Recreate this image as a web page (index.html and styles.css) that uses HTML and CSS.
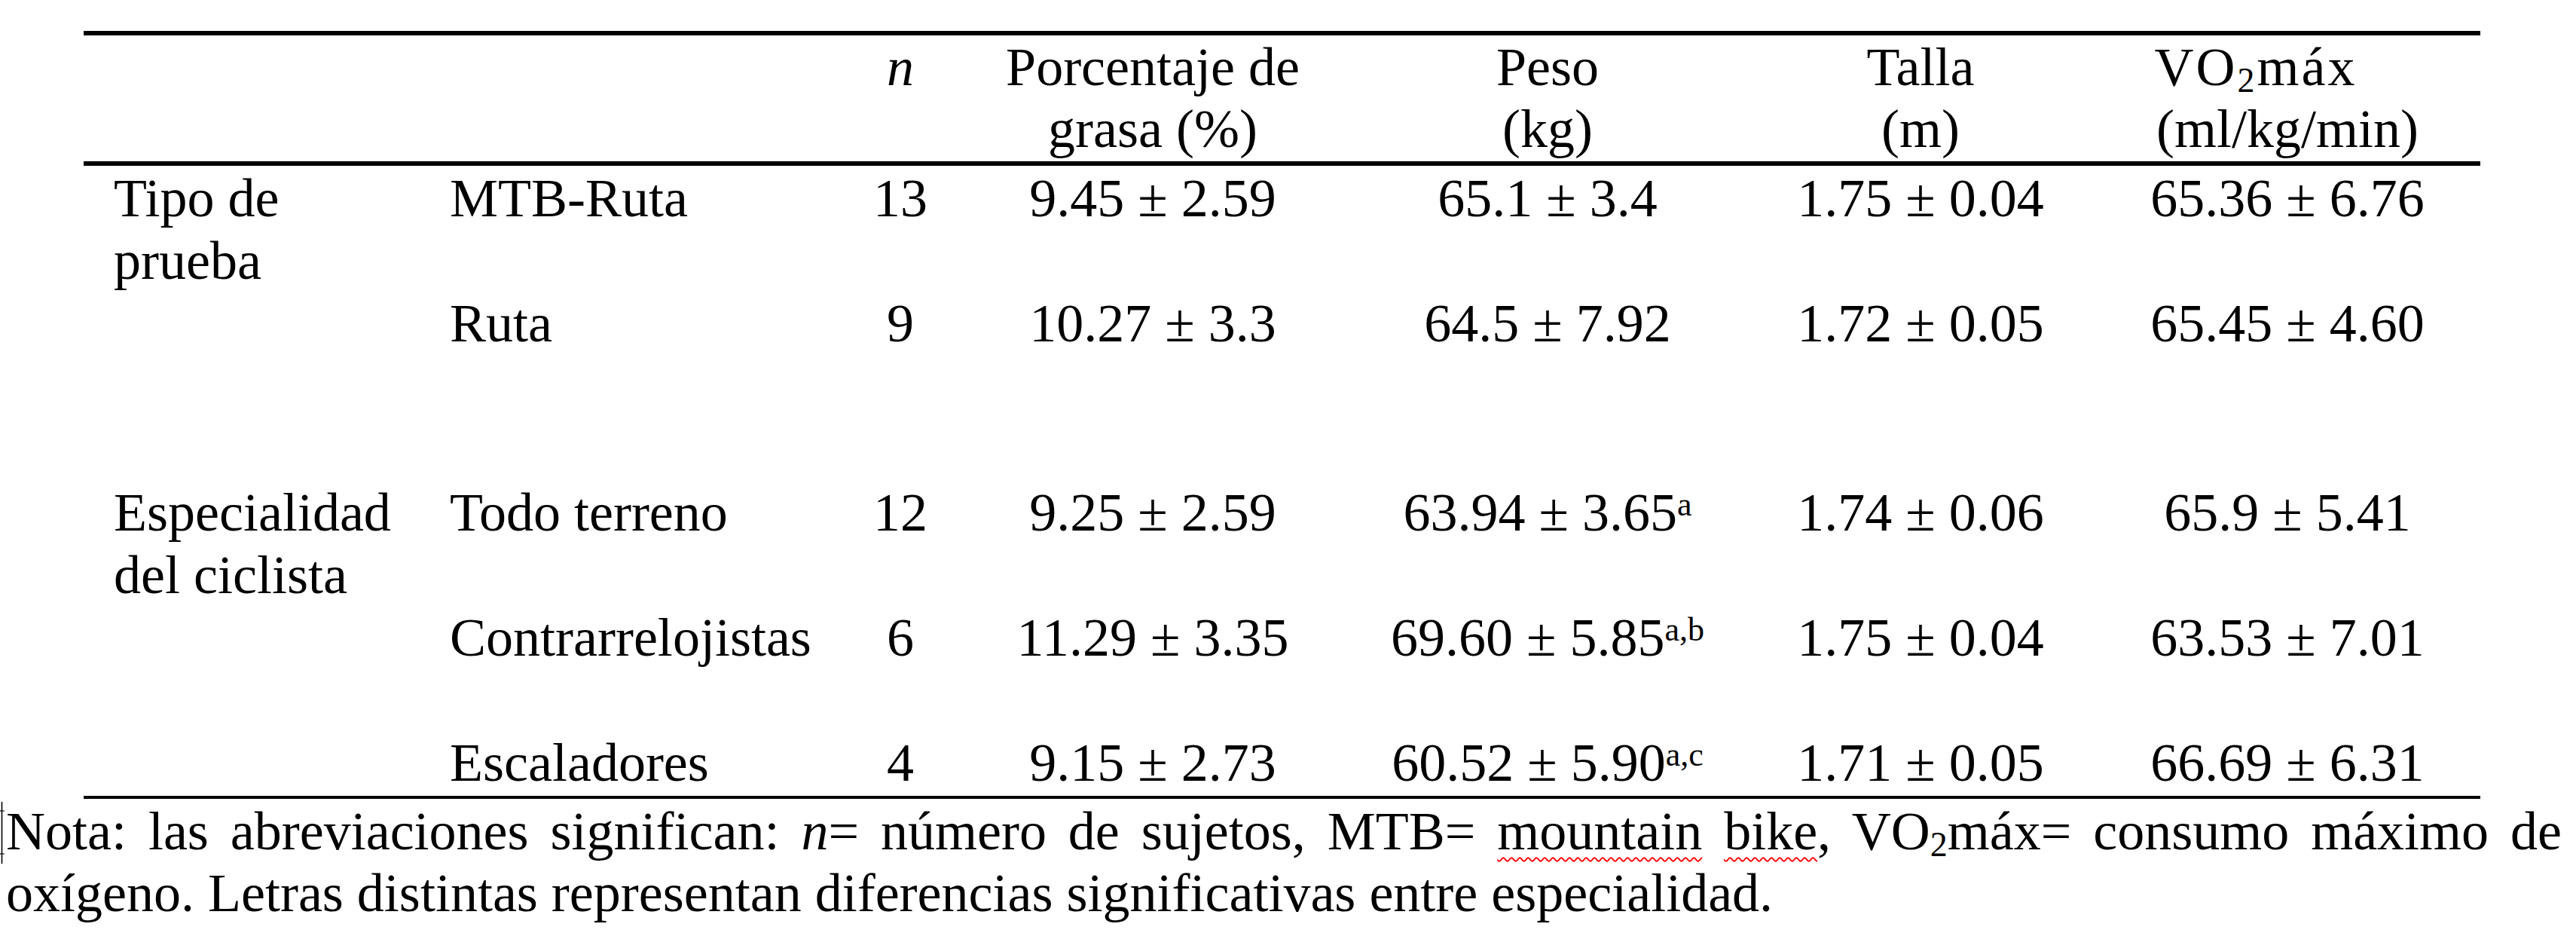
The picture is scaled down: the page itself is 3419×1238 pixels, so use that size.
FILE: index.html
```html
<!DOCTYPE html>
<html lang="es">
<head>
<meta charset="utf-8">
<title>Tabla ciclistas</title>
<link rel="stylesheet" href="styles.css">
</head>
<body>
<div class="page">
  <table class="data">
    <colgroup>
      <col class="c1"><col class="c2"><col class="c3"><col class="c4"><col class="c5"><col class="c6"><col class="c7">
    </colgroup>
    <thead>
      <tr class="head">
        <th class="label"></th>
        <th class="label"></th>
        <th class="num"><i>n</i></th>
        <th class="num">Porcentaje de<br>grasa (%)</th>
        <th class="num">Peso<br>(kg)</th>
        <th class="num">Talla<br>(m)</th>
        <th class="num last"><span class="vo">VO<sub>2</sub>máx</span><br>(ml/kg/min)</th>
      </tr>
    </thead>
    <tbody>
      <tr class="r-first">
        <td class="label">Tipo de<br>prueba</td>
        <td class="label">MTB-Ruta</td>
        <td class="num">13</td>
        <td class="num">9.45 ± 2.59</td>
        <td class="num">65.1 ± 3.4</td>
        <td class="num">1.75 ± 0.04</td>
        <td class="num last">65.36 ± 6.76</td>
      </tr>
      <tr class="r-gap">
        <td class="label"></td>
        <td class="label">Ruta</td>
        <td class="num">9</td>
        <td class="num">10.27 ± 3.3</td>
        <td class="num">64.5 ± 7.92</td>
        <td class="num">1.72 ± 0.05</td>
        <td class="num last">65.45 ± 4.60</td>
      </tr>
      <tr class="r-first">
        <td class="label">Especialidad<br>del ciclista</td>
        <td class="label">Todo terreno</td>
        <td class="num">12</td>
        <td class="num">9.25 ± 2.59</td>
        <td class="num">63.94 ± 3.65<sup>a</sup></td>
        <td class="num">1.74 ± 0.06</td>
        <td class="num last">65.9 ± 5.41</td>
      </tr>
      <tr class="r-two">
        <td class="label"></td>
        <td class="label">Contrarrelojistas</td>
        <td class="num">6</td>
        <td class="num">11.29 ± 3.35</td>
        <td class="num">69.60 ± 5.85<sup>a,b</sup></td>
        <td class="num">1.75 ± 0.04</td>
        <td class="num last">63.53 ± 7.01</td>
      </tr>
      <tr class="r-last">
        <td class="label"></td>
        <td class="label">Escaladores</td>
        <td class="num">4</td>
        <td class="num">9.15 ± 2.73</td>
        <td class="num">60.52 ± 5.90<sup>a,c</sup></td>
        <td class="num">1.71 ± 0.05</td>
        <td class="num last">66.69 ± 6.31</td>
      </tr>
    </tbody>
  </table>

  <div class="note">
    <svg class="cursor" viewBox="0 0 8 84" width="8" height="84" aria-hidden="true">
      <line x1="2.5" y1="1" x2="2.5" y2="83" stroke="#000" stroke-width="1.6"/>
      <line x1="0" y1="13" x2="2.5" y2="13" stroke="#000" stroke-width="1.2"/>
      <line x1="2.5" y1="13" x2="6" y2="13" stroke="#000" stroke-width="1"/>
      <line x1="0" y1="70" x2="2.5" y2="70" stroke="#000" stroke-width="1.2"/>
      <line x1="2.5" y1="70" x2="6" y2="70" stroke="#000" stroke-width="1"/>
    </svg>
    <div class="note-text">
      <div class="note-line justified">Nota: las abreviaciones significan: <i>n</i>= número de sujetos, MTB= <span class="spell">mountain</span> <span class="spell">bike</span>, VO<sub>2</sub>máx= consumo máximo de</div>
      <div class="note-line">oxígeno. Letras distintas representan diferencias significativas entre especialidad.</div>
    </div>
  </div>
</div>
</body>
</html>
```

FILE: styles.css
```css
html, body {
  margin: 0;
  padding: 0;
  background: #ffffff;
}

body {
  width: 3419px;
  height: 1238px;
  overflow: hidden;
  color: #000000;
  font-family: "Liberation Serif", "Times New Roman", serif;
  font-size: 72px;
}

.page {
  padding-top: 41px;
}

.data {
  margin-left: 111px;
  width: 3181px;
  table-layout: fixed;
  border-collapse: collapse;
  border-spacing: 0;
  border-top: 6px solid #000;
  border-bottom: 4px solid #000;
}

.c1 { width: 446px; }
.c2 { width: 543px; }
.c3 { width: 190px; }
.c4 { width: 480px; }
.c5 { width: 568px; }
.c6 { width: 422px; }
.c7 { width: 532px; }

.data th,
.data td {
  padding: 0;
  vertical-align: top;
  font-weight: normal;
  white-space: nowrap;
  line-height: 83px;
}

.data .label {
  text-align: left;
  padding-left: 40px;
}

.data .num {
  text-align: center;
}

.data .last {
  padding-left: 20px;
}

.head th {
  line-height: 82px;
  padding-top: 1px;
  padding-bottom: 2px;
  border-bottom: 6px solid #000;
}

.vo {
  display: inline-block;
  letter-spacing: 3px;
  margin-right: 84px;
}

.r-first td {
  height: 166px;
  padding-top: 2px;
}

.r-gap td {
  height: 249px;
}

.r-two td {
  height: 166px;
}

.r-last td {
  height: 83px;
  padding-bottom: 2px;
}

sup {
  font-size: 44px;
  line-height: 0;
  vertical-align: 20px;
}

sub {
  font-size: 46px;
  line-height: 0;
  vertical-align: -9px;
}

.note {
  display: grid;
  grid-template-columns: 8px 3392px;
  padding-top: 2px;
}

.cursor {
  display: block;
  margin-top: 1px;
}

.note-line {
  line-height: 82px;
  white-space: nowrap;
}

.note-line.justified {
  white-space: normal;
  text-align: justify;
  text-align-last: justify;
}

.spell {
  text-decoration: underline wavy #ff0000;
  text-decoration-thickness: 2px;
  text-underline-offset: 10px;
  text-decoration-skip-ink: none;
}
```
